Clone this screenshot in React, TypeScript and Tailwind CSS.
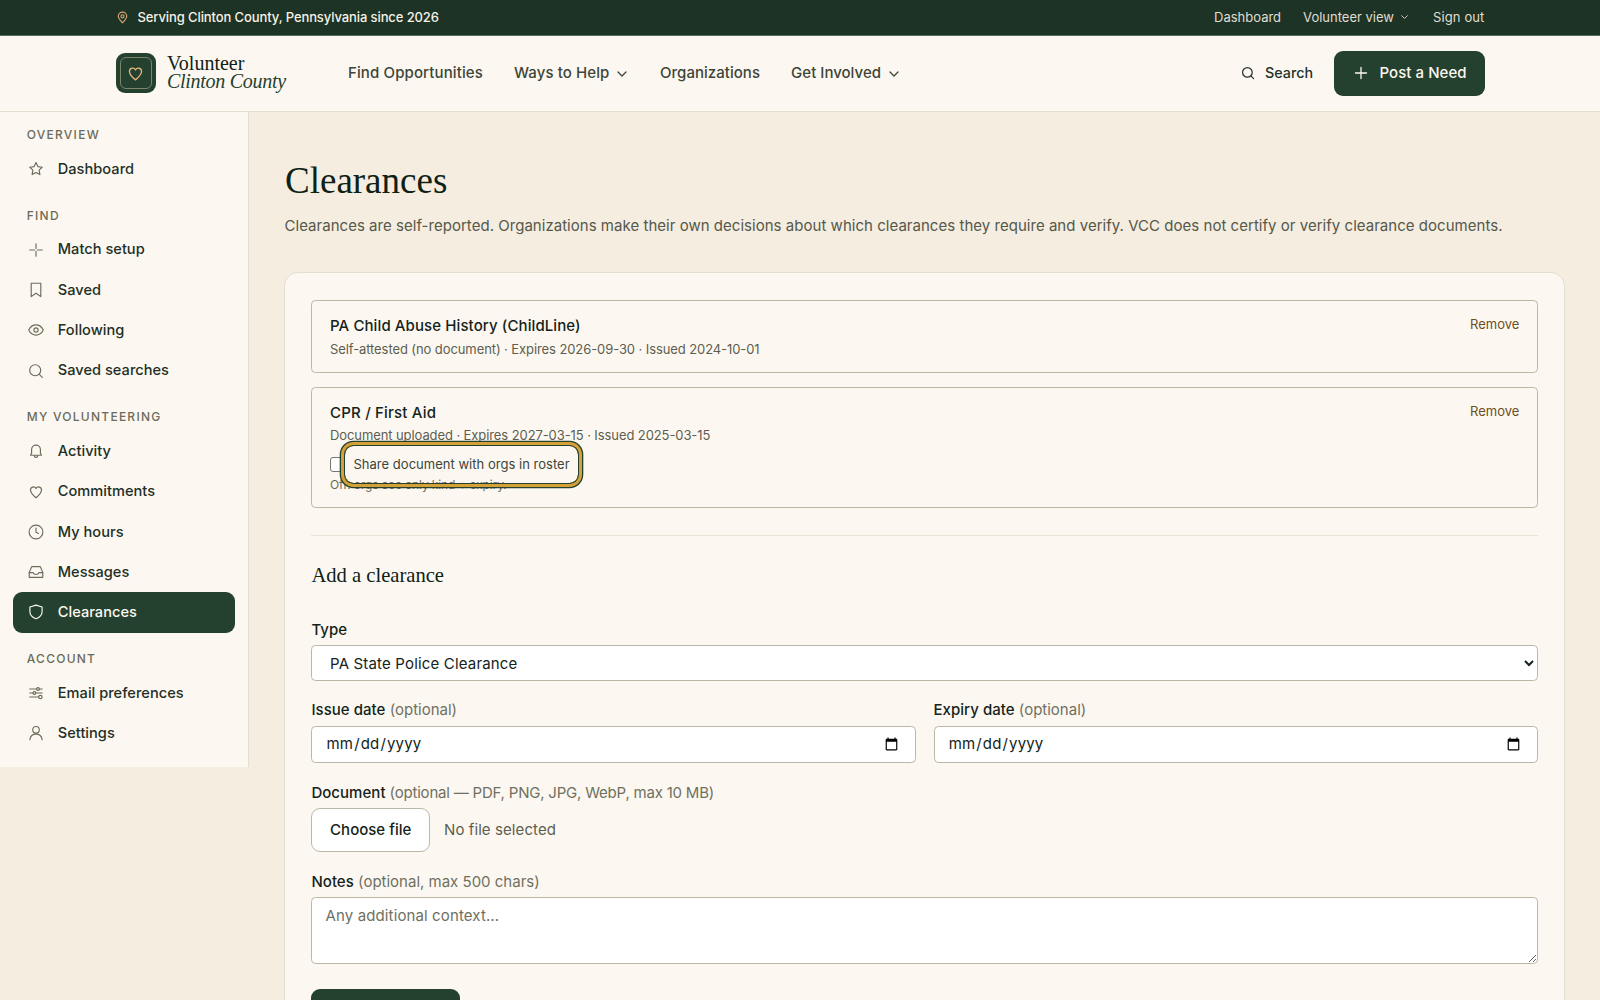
import type { ReactNode } from "react";

type IconName =
  | "star"
  | "match"
  | "bookmark"
  | "eye"
  | "search"
  | "bell"
  | "heart"
  | "clock"
  | "inbox"
  | "shield"
  | "sliders"
  | "user";

interface NavItem {
  label: string;
  icon: IconName;
  active?: boolean;
}

const sections: { title: string; items: NavItem[] }[] = [
  { title: "Overview", items: [{ label: "Dashboard", icon: "star" }] },
  {
    title: "Find",
    items: [
      { label: "Match setup", icon: "match" },
      { label: "Saved", icon: "bookmark" },
      { label: "Following", icon: "eye" },
      { label: "Saved searches", icon: "search" },
    ],
  },
  {
    title: "My volunteering",
    items: [
      { label: "Activity", icon: "bell" },
      { label: "Commitments", icon: "heart" },
      { label: "My hours", icon: "clock" },
      { label: "Messages", icon: "inbox" },
      { label: "Clearances", icon: "shield", active: true },
    ],
  },
  {
    title: "Account",
    items: [
      { label: "Email preferences", icon: "sliders" },
      { label: "Settings", icon: "user" },
    ],
  },
];

export default function App() {
  return (
    <div className="h-[1000px] overflow-hidden bg-[#f4ede0] font-['Inter','Liberation_Sans',sans-serif] text-[15px] text-[#14231a]">
      <TopBar />
      <Header />
      <div className="flex items-start">
        <Sidebar />
        <main className="min-w-0 flex-1 pt-[46px] pr-[34.6px] pl-[35px]">
          <h1 className="pl-px font-['Liberation_Serif',serif] text-[37px] leading-[46px] text-[#0f2115]">
            Clearances
          </h1>
          <p className="mt-2.5 pl-[0.5px] text-[15px] leading-6 tracking-[0.03px] whitespace-nowrap text-[#56584a]">
            Clearances are self-reported. Organizations make their own decisions
            about which clearances they require and verify. VCC does not certify
            or verify clearance documents.
          </p>
          <section className="mt-[34px] h-[800px] rounded-[14px] border border-[#e2dfd1] bg-[#fcf8f1] px-[26.4px] pt-[27px]">
            <ClearanceList />
            <ClearanceForm />
          </section>
        </main>
      </div>
    </div>
  );
}

function TopBar() {
  return (
    <div className="h-9 border-b border-[#5d6b5d] bg-[#1c3325] text-[13px] text-[#e0ddd2]">
      <div className="mx-auto flex h-[35px] w-[1369px] items-center justify-between">
        <div className="flex items-center gap-[9px] font-[450] tracking-[-0.1px] text-[#f7f1e6]">
          <svg
            viewBox="0 0 16 16"
            className="size-[13px] text-[#d9a673]"
            fill="none"
            stroke="currentColor"
            strokeWidth="1.4"
          >
            <path d="M8 14.5C5 11.400 2.800 9.200 2.800 6.500a5.200 5.200 0 0 1 10.400 0C13.200 9.200 11 11.400 8 14.500Z" />
            <circle cx="8" cy="6.500" r="1.900" />
          </svg>
          Serving Clinton County, Pennsylvania since 2026
        </div>
        <div className="flex items-center">
          <a>Dashboard</a>
          <a className="ml-[22px] flex items-center gap-[7px]">
            Volunteer view
            <Chevron className="w-[7px]" />
          </a>
          <a className="ml-[25px] tracking-[0.12px]">Sign out</a>
        </div>
      </div>
    </div>
  );
}

function Header() {
  return (
    <header className="h-19 border-b border-[#e2dfd1] bg-[#fcf8f1]">
      <div className="mx-auto flex h-[74px] w-[1369px] items-center">
        <div className="flex size-10 items-center justify-center rounded-[9px] bg-[#24402e] p-1">
          <div className="flex size-full items-center justify-center rounded-md border border-[#7d8468]">
            <svg
              viewBox="0 0 16 16"
              className="size-[17px] text-[#dfb27c]"
              fill="none"
              stroke="currentColor"
              strokeWidth="1.3"
              strokeLinejoin="round"
            >
              <path d="M8 14C5 11.500 2.300 8.900 2.300 6A3 3 0 0 1 8 4.700 3 3 0 0 1 13.700 6C13.700 8.900 11 11.500 8 14Z" />
            </svg>
          </div>
        </div>
        <div className="ml-[11.5px] w-[120px] pb-[3px] font-['Liberation_Serif',serif] text-[20px] leading-[18px] whitespace-nowrap text-[#0f2115]">
          <div>Volunteer</div>
          <div className="tracking-[-0.28px] text-[#24402e] italic">
            Clinton County
          </div>
        </div>
        <nav className="ml-[61px] flex items-center gap-[31px] pt-px font-[450] text-[#3d4538]">
          <a className="tracking-[0.12px]">Find Opportunities</a>
          <a className="flex items-center gap-2 tracking-[0.1px]">
            Ways to Help
            <Chevron className="w-[10px]" />
          </a>
          <a className="ml-[1.5px] tracking-[0.04px]">Organizations</a>
          <a className="flex items-center gap-2 tracking-[0.02px]">
            Get Involved
            <Chevron className="w-[10px]" />
          </a>
        </nav>
        <div className="ml-auto flex items-center">
          <a className="flex items-center gap-[10px] text-[14.3px] font-[450] text-[#24332a]">
            <svg
              viewBox="0 0 16 16"
              className="size-[14px]"
              fill="none"
              stroke="currentColor"
              strokeWidth="1.4"
              strokeLinecap="round"
            >
              <circle cx="7.300" cy="7.300" r="5.500" />
              <path d="m11.600 11.600 2.800 2.800" />
            </svg>
            Search
          </a>
          <button
            type="button"
            className="ml-[21px] flex h-[45px] w-[150.5px] items-center gap-[11.500px] rounded-[9px] bg-[#24402e] pl-5 font-[550] tracking-[0.05px] whitespace-nowrap text-[#fcf8f1]"
          >
            <svg
              viewBox="0 0 14 14"
              className="size-[14px]"
              fill="none"
              stroke="currentColor"
              strokeWidth="1.300"
              strokeLinecap="round"
            >
              <path d="M7 1.500v11M1.500 7h11" />
            </svg>
            Post a Need
          </button>
        </div>
      </div>
    </header>
  );
}

function Sidebar() {
  return (
    <aside className="h-[654.5px] w-[249px] border-r border-[#e2dfd1] bg-[#fcf8f1] px-[13.2px] pt-[14px]">
      {sections.map((section, index) => (
        <div key={section.title} className={index > 0 ? "mt-[17.6px]" : ""}>
          <h2 className="h-[22.8px] pl-[13.6px] text-[12px] leading-[18px] font-[450] tracking-[1.25px] text-[#6b6b59] uppercase">
            {section.title}
          </h2>
          {section.items.map((item) => (
            <SidebarLink key={item.label} {...item} />
          ))}
        </div>
      ))}
    </aside>
  );
}

function SidebarLink({ label, icon, active = false }: NavItem) {
  return (
    <a
      className={`flex h-[40.3px] items-center rounded-[9px] pl-[14.4px] text-[14.600px] font-[450] ${
        active ? "bg-[#24402e] text-[#fcf8f1]" : "text-[#222f26]"
      }`}
    >
      <Icon
        name={icon}
        className={`size-4 ${active ? "text-[#fcf8f1]" : "text-[#6b6b59]"}`}
      />
      <span className="ml-[14.2px] pt-[1.500px] tracking-[0.02px]">
        {label}
      </span>
    </a>
  );
}

function ClearanceList() {
  return (
    <div className="grid gap-[13.6px]">
      <article className="flex h-[73.2px] justify-between rounded-[4.400px] border border-[#bcb8a6] px-[17.6px] pt-3">
        <div>
          <h3 className="leading-[26px] font-[480] tracking-[0.1px]">
            PA Child Abuse History (ChildLine)
          </h3>
          <p className="-mt-[0.500px] text-[13px] leading-5 tracking-[-0.09px] text-[#5d5e50]">
            Self-attested (no document) · Expires 2026-09-30 · Issued 2024-10-01
          </p>
        </div>
        <RemoveButton />
      </article>
      <article className="flex h-[121px] justify-between rounded-[4.400px] border border-[#bcb8a6] px-[17.6px] pt-3">
        <div>
          <h3 className="leading-[26px] font-[480] tracking-[0.2px]">
            CPR / First Aid
          </h3>
          <p className="-mt-[0.500px] text-[13px] leading-5 tracking-[-0.09px] text-[#5d5e50]">
            Document uploaded · Expires 2027-03-15 · Issued 2025-03-15
          </p>
          <label className="mt-[9.300px] flex h-5 items-center text-[13px] text-[#3d4538]">
            <span className="size-[14.500px] shrink-0 rounded-[3px] border border-[#76766c] bg-white" />
            {/* focus ring */}
            <span className="relative z-10 ml-[0.500px] flex h-[37px] items-center rounded-[8.500px] px-[8.500px] tracking-[0.02px] whitespace-nowrap shadow-[0_0_0_1px_#24402e,0_0_0_4px_#d4a037,0_0_0_5.300px_#24402e]">
              Share document with orgs in roster
            </span>
          </label>
          <p className="text-[12px] leading-5 tracking-[-0.12px] text-[#6b6b59]">
            Off: orgs see only kind + expiry.
          </p>
        </div>
        <RemoveButton />
      </article>
    </div>
  );
}

function RemoveButton() {
  return (
    <button
      type="button"
      className="h-[22px] text-[13px] leading-[22px] text-[#6f4e1e]"
    >
      Remove
    </button>
  );
}

function ClearanceForm() {
  return (
    <form className="mt-[26.800px] border-t border-[#e8e4d6] pt-[26.400px]">
      <h2 className="font-['Liberation_Serif',serif] text-[20.600px] leading-[27px] text-[#0f2115]">
        Add a clearance
      </h2>
      <div className="mt-[29px] grid gap-[17.6px]">
        <Field label="Type">
          <select className="block h-[35.3px] w-full rounded-[4.400px] border border-[#bcb8a6] bg-white px-[13.6px] tracking-[0.17px]">
            <option>PA State Police Clearance</option>
          </select>
        </Field>
        <div className="grid grid-cols-2 gap-[17.6px]">
          <Field label="Issue date" hint="(optional)">
            <DateInput />
          </Field>
          <Field label="Expiry date" hint="(optional)">
            <DateInput />
          </Field>
        </div>
        <Field
          label="Document"
          hint="(optional — PDF, PNG, JPG, WebP, max 10 MB)"
          hintClassName="tracking-[-0.2px]"
        >
          <div className="flex items-center gap-3.5">
            <span className="flex h-11 w-[118.600px] items-center justify-center rounded-[9px] border border-[#bcb8a6] bg-white font-[480]">
              Choose file
            </span>
            <span className="tracking-[0.09px] text-[#5d5e50]">
              No file selected
            </span>
          </div>
        </Field>
        <Field label="Notes" hint="(optional, max 500 chars)">
          <textarea
            placeholder="Any additional context…"
            className="block h-[66.4px] w-full rounded-[4.400px] border border-[#bcb8a6] bg-white px-[13.200px] py-[6px] leading-[23px] tracking-[0.12px] placeholder:text-[#6f705f]"
          />
        </Field>
      </div>
      <button
        type="submit"
        aria-label="Add clearance"
        className="mt-[25px] h-[45px] w-[149px] rounded-[9px] bg-[#24402e]"
      />
    </form>
  );
}

interface FieldProps {
  label: string;
  hint?: string;
  hintClassName?: string;
  children: ReactNode;
}

function Field({ label, hint, hintClassName = "", children }: FieldProps) {
  return (
    <div>
      <div className="mb-[4.400px] leading-[23px]">
        <span className="font-[480] tracking-[0.04px]">{label}</span>
        {hint ? (
          <span className={`text-[#6f705f] ${hintClassName}`}> {hint}</span>
        ) : null}
      </div>
      {children}
    </div>
  );
}

function DateInput() {
  return (
    <input
      type="date"
      className="block h-[37.600px] w-full rounded-[4.400px] border border-[#bcb8a6] bg-white pr-[14.200px] pl-[13.200px] tracking-[0.15px]"
    />
  );
}

function Chevron({ className }: { className: string }) {
  return (
    <svg
      viewBox="0 0 10 6"
      className={className}
      fill="none"
      stroke="currentColor"
      strokeWidth="1.300"
      strokeLinecap="round"
      strokeLinejoin="round"
    >
      <path d="m1 1 4 4 4-4" />
    </svg>
  );
}

function Icon({ name, className }: { name: IconName; className: string }) {
  return (
    <svg
      viewBox="0 0 16 16"
      className={className}
      fill="none"
      stroke="currentColor"
      strokeWidth="1.15"
      strokeLinecap="round"
      strokeLinejoin="round"
    >
      {icons[name]}
    </svg>
  );
}

const icons: Record<IconName, ReactNode> = {
  star: (
    <path d="m8 1.600 1.900 4 4.400.6-3.200 3 .8 4.400L8 11.500l-3.900 2.100.8-4.400-3.200-3 4.400-.6Z" />
  ),
  match: <path d="M8 1.700v4.900M8 9.400v4.900M1.700 8h4.900M9.400 8h4.900" />,
  bookmark: <path d="M3.200 1.200h9.600v13.400L8 11.300l-4.800 3.300Z" />,
  eye: (
    <>
      <path d="M.7 8S3.300 2.900 8 2.900 15.300 8 15.300 8 12.700 13.100 8 13.100.7 8 .7 8Z" />
      <circle cx="8" cy="8" r="2.100" />
    </>
  ),
  search: (
    <>
      <circle cx="7.200" cy="7.200" r="5.500" />
      <path d="m11.300 11.300 3 3" />
    </>
  ),
  bell: (
    <>
      <path d="M2.700 12.200v-.7l.9-1.200V6.500a4.400 4.400 0 0 1 8.800 0v3.800l.9 1.200v.7Z" />
      <path d="M6.300 12.700a1.700 1.700 0 0 0 3.400 0" />
    </>
  ),
  heart: (
    <path d="M8 13.800C5 11.300 2.500 8.700 2.500 6A2.900 2.900 0 0 1 8 4.600 2.900 2.900 0 0 1 13.500 6C13.500 8.700 11 11.300 8 13.800Z" />
  ),
  clock: (
    <>
      <circle cx="8" cy="8" r="6.900" />
      <path d="M8 4v4.200l2.500 1.300" />
    </>
  ),
  inbox: (
    <>
      <path d="M3.700 2.600h8.600l2.500 6v4.700H1.200V8.600Z" />
      <path d="M1.200 8.600h3.900c.3 1.100 1.400 1.900 2.900 1.900s2.600-.8 2.900-1.900h3.900" />
    </>
  ),
  shield: (
    <path d="M8 1.100 14.100 3v4.600c0 3.700-2.600 6-6.100 7.200-3.500-1.200-6.100-3.500-6.100-7.200V3Z" />
  ),
  sliders: (
    <>
      <path d="M1.700 4h7M11.300 4h2.900M1.700 8h3.200M8 8h6.200M1.700 12h8.800" />
      <circle cx="10" cy="4" r="1.400" />
      <circle cx="6.400" cy="8" r="1.400" />
      <circle cx="12.400" cy="12" r="1.700" />
    </>
  ),
  user: (
    <>
      <circle cx="8" cy="4.800" r="3.300" />
      <path d="M1.900 14.600c.5-3.700 2.900-5.500 6.100-5.500s5.600 1.800 6.100 5.500" />
    </>
  ),
};
